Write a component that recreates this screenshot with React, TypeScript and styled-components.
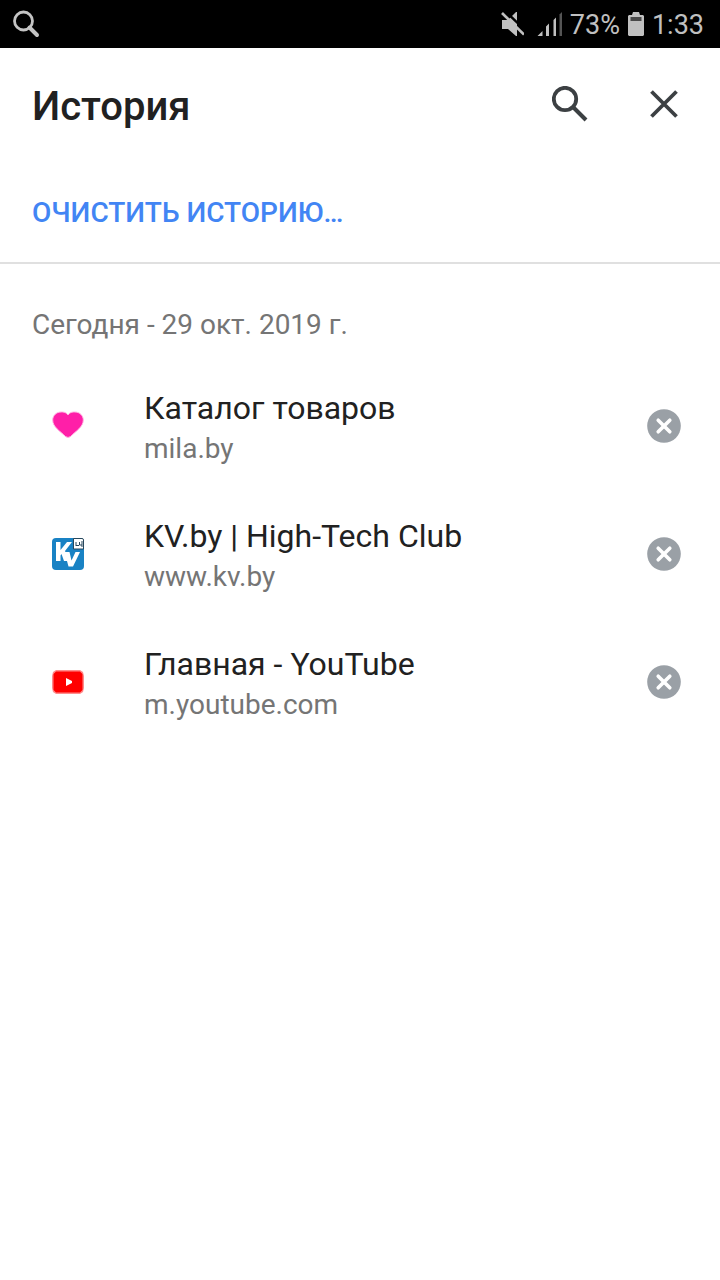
import React from "react";
import styled, { createGlobalStyle } from "styled-components";

const GlobalStyle = createGlobalStyle`
  *, *::before, *::after { box-sizing: border-box; }
  body {
    margin: 0;
    background: #ffffff;
    color: #212121;
    font-family: Roboto, "Noto Sans", sans-serif;
  }
  h1, h2, ul, p { margin: 0; padding: 0; }
  svg { display: block; }
`;

const StatusBar = styled.div`
  display: flex;
  align-items: center;
  justify-content: space-between;
  height: 48px;
  padding: 0 16px 0 12px;
  background: #000000;
  color: #c0c0c0;
  font-size: 27px;
  line-height: 32px;
`;

const StatusGroup = styled.div`
  display: flex;
  align-items: center;
  gap: 8px;
`;

const StatusIcons = styled.div`
  display: flex;
  gap: 12px;
`;

const StatusText = styled.span`
  padding-top: 2px;
`;

const Header = styled.header`
  display: flex;
  align-items: center;
  height: 112px;
  padding: 0 24px 0 32px;
`;

const Title = styled.h1`
  flex: 1;
  padding-top: 6px;
  font-size: 40px;
  font-weight: 500;
  line-height: 48px;
`;

const HeaderActions = styled.div`
  display: flex;
  gap: 30px;
`;

const IconButton = styled.button<{ $size: number }>`
  display: grid;
  place-items: center;
  width: ${({ $size }) => $size}px;
  height: ${({ $size }) => $size}px;
  padding: 0;
  border: 0;
  background: transparent;
  cursor: pointer;
`;

const ClearBar = styled.div`
  display: flex;
  align-items: center;
  height: 104px;
  padding-top: 4px;
  border-bottom: 2px solid #e0e0e0;
`;

const ClearButton = styled.button`
  padding: 32px;
  border: 0;
  background: transparent;
  color: #4285f4;
  font: 500 28px/34px Roboto, "Noto Sans", sans-serif;
  text-transform: uppercase;
  cursor: pointer;
`;

const DateHeading = styled.h2`
  padding: 44px 32px 20px;
  color: #757575;
  font-size: 28px;
  font-weight: 400;
  line-height: 34px;
`;

const HistoryList = styled.ul`
  list-style: none;
`;

const HistoryRow = styled.li`
  display: flex;
  align-items: center;
  height: 128px;
  padding: 0 32px 0 52px;
`;

const EntryLink = styled.a`
  display: flex;
  flex: 1;
  align-items: center;
  gap: 60px;
  min-width: 0;
  color: inherit;
  text-decoration: none;
`;

const EntryText = styled.div`
  min-width: 0;
  padding-top: 4px;
`;

const EntryTitle = styled.p`
  font-size: 32px;
  line-height: 42px;
`;

const EntryHost = styled.p`
  color: #757575;
  font-size: 28px;
  line-height: 40px;
`;

const StatusSearchIcon = () => (
  <svg width="28" height="28" viewBox="0 0 28 28" fill="none" stroke="#c4c4c4" aria-hidden="true">
    <circle cx="11.500" cy="11" r="9" strokeWidth="2.800" />
    <path d="M17.500 17.500L25 25" strokeWidth="4" strokeLinecap="round" />
  </svg>
);

const MuteIcon = () => (
  <svg width="24" height="24" viewBox="0 0 24 24" aria-hidden="true">
    <path d="M2 8h6l8-8h1v24h-1l-8-7H2z" fill="#c0c0c0" />
    <path d="M4-2L27 20" stroke="#000" strokeWidth="2.500" />
    <path d="M2 1L24 22.500" stroke="#c0c0c0" strokeWidth="2.600" />
  </svg>
);

const SignalIcon = () => (
  <svg width="26" height="24" viewBox="0 0 26 24" fill="#c0c0c0" aria-hidden="true">
    <path d="M1.500 24L6.500 19v5zM10 24V14.500L13 11.500V24zM17.500 24V8L20 5.500V24z" />
    <path d="M23.500 24V2.500L26 0V24z" fill="#555" />
  </svg>
);

const BatteryIcon = () => (
  <svg width="16" height="24" viewBox="0 0 16 24" aria-hidden="true">
    <path d="M5 0h6l1 3h3l1 1v19l-1 1H1l-1-1V4l1-1h3z" fill="#c0c0c0" />
    <path d="M2.500 5h11v4h-11z" fill="#484848" />
  </svg>
);

const SearchIcon = () => (
  <svg width="36" height="36" viewBox="0 0 36 36" fill="none" stroke="#3c4043" aria-hidden="true">
    <circle cx="13" cy="13" r="11.200" strokeWidth="3.800" />
    <path d="M21.500 21.500L34 34" strokeWidth="4" />
  </svg>
);

const CloseIcon = () => (
  <svg width="28" height="28" viewBox="0 0 28 28" fill="none" stroke="#3c4043" aria-hidden="true">
    <path d="M1.500 1.500L26.500 26.500M26.500 1.500L1.500 26.500" strokeWidth="3.800" />
  </svg>
);

const RemoveIcon = () => (
  <svg width="34" height="34" viewBox="0 0 34 34" aria-hidden="true">
    <circle cx="17" cy="17" r="16.800" fill="#9aa0a6" />
    <path d="M11.200 11.200L22.800 22.800M22.800 11.200L11.200 22.800" stroke="#fff" strokeWidth="3.600" strokeLinecap="round" />
  </svg>
);

const HeartFavicon = () => (
  <svg width="32" height="32" viewBox="0 0 32 32" aria-hidden="true">
    <path
      d="M16 5C14 2 11 2 9 2C4 2 .7 6 .7 10C.7 17 8 21 13.500 26.500Q16 28.500 18.500 26.500C24 21 31.300 17 31.300 10C31.300 6 28 2 23 2C21 2 18 2 16 5z"
      fill="#ff1fa8"
      stroke="#ffb5e2"
      strokeWidth="1"
    />
  </svg>
);

const KvFavicon = () => (
  <svg width="32" height="32" viewBox="0 0 32 32" aria-hidden="true">
    <rect width="32" height="32" rx="4" fill="#1982c4" />
    <path d="M4 4h4.500v8L15 4h5l-7 9 4 10h-5L9.500 16l-1 1.500V23H4z" fill="#fff" />
    <path d="M12.500 14H17.500l2 8.500L23.500 14H28l-7 14.500h-4.500z" fill="#fff" />
    <path d="M21.500 .5H30q1.500 0 1.500 1.500v9h-10z" fill="#fff" stroke="#27475c" strokeWidth="1" />
    <path d="M24 4v4M24 7.500h3M27.500 4v3h2.500M30 3v6" fill="none" stroke="#27475c" strokeWidth="1" />
  </svg>
);

const YouTubeFavicon = () => (
  <svg width="32" height="32" viewBox="0 0 32 32" aria-hidden="true">
    <path d="M4 4h24l3 2 1 4v12l-1 4-3 2H4l-3-2-1-4V10l1-4z" fill="#ff8c8c" />
    <path d="M4 5.500h24l2.500 2.500v16L28 26.500H4L1.500 24V8z" fill="#f00" />
    <path d="M14 12l6 3v2l-6 3z" fill="#fff" />
  </svg>
);

const entries = [
  { title: "Каталог товаров", host: "mila.by", Favicon: HeartFavicon },
  { title: "KV.by | High-Tech Club", host: "www.kv.by", Favicon: KvFavicon },
  { title: "Главная - YouTube", host: "m.youtube.com", Favicon: YouTubeFavicon },
];

export default function App() {
  return (
    <>
      <GlobalStyle />
      <StatusBar>
        <StatusSearchIcon />
        <StatusGroup>
          <StatusIcons>
            <MuteIcon />
            <SignalIcon />
          </StatusIcons>
          <StatusText>73%</StatusText>
          <BatteryIcon />
          <StatusText>1:33</StatusText>
        </StatusGroup>
      </StatusBar>
      <Header>
        <Title>История</Title>
        <HeaderActions>
          <IconButton $size={64} aria-label="Поиск">
            <SearchIcon />
          </IconButton>
          <IconButton $size={64} aria-label="Закрыть">
            <CloseIcon />
          </IconButton>
        </HeaderActions>
      </Header>
      <main>
        <ClearBar>
          <ClearButton>Очистить историю…</ClearButton>
        </ClearBar>
        <DateHeading>Сегодня - 29 окт. 2019 г.</DateHeading>
        <HistoryList>
          {entries.map(({ title, host, Favicon }) => (
            <HistoryRow key={host}>
              <EntryLink href={`https://${host}`}>
                <Favicon />
                <EntryText>
                  <EntryTitle>{title}</EntryTitle>
                  <EntryHost>{host}</EntryHost>
                </EntryText>
              </EntryLink>
              <IconButton $size={48} aria-label={`Удалить: ${title}`}>
                <RemoveIcon />
              </IconButton>
            </HistoryRow>
          ))}
        </HistoryList>
      </main>
    </>
  );
}
